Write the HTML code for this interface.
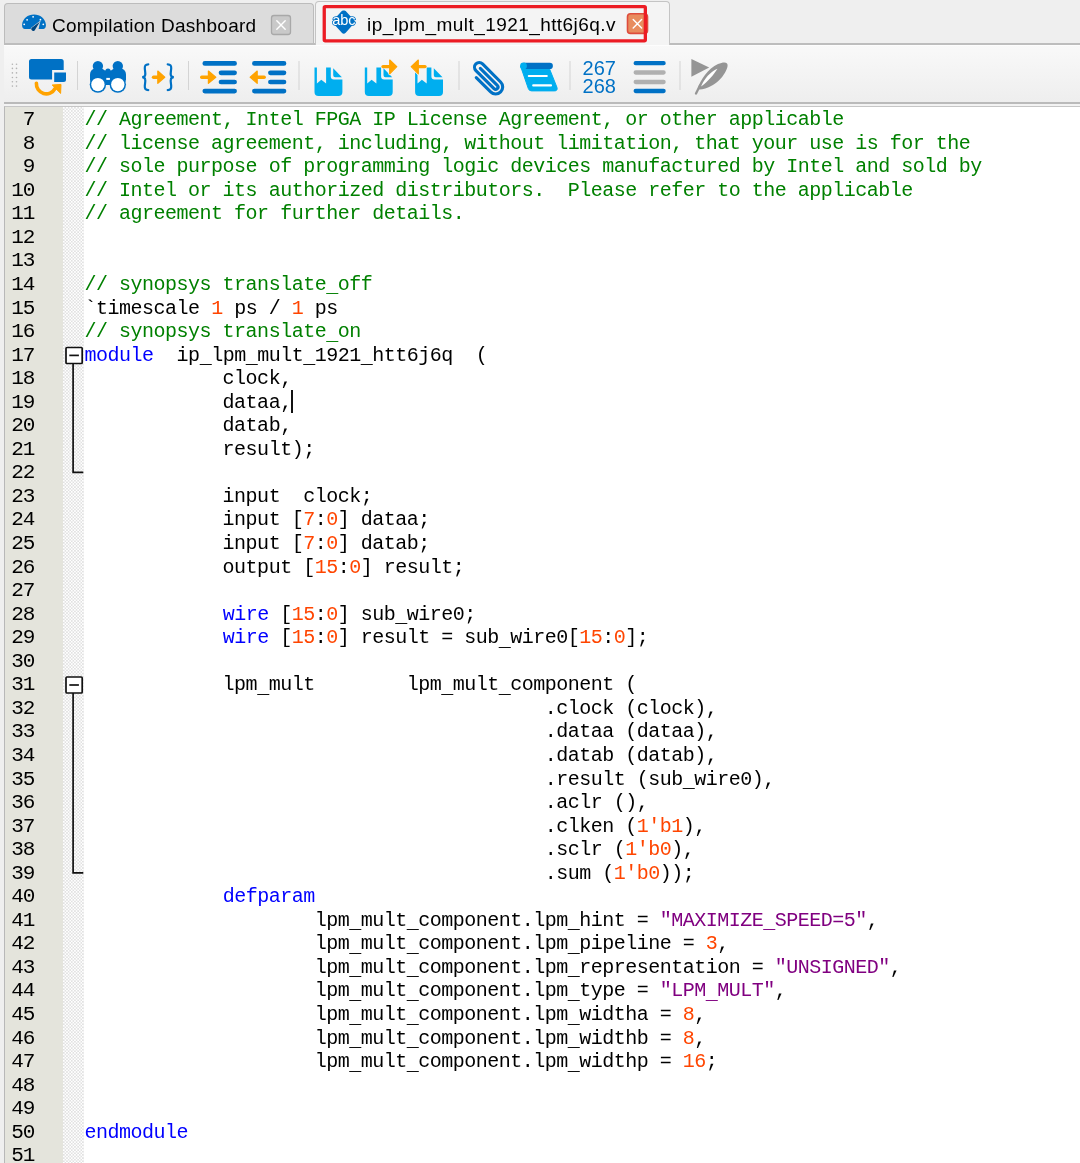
<!DOCTYPE html>
<html><head><meta charset="utf-8">
<style>
html,body{margin:0;padding:0}
body{width:1080px;height:1163px;overflow:hidden;position:relative;background:#efefef;font-family:"Liberation Sans",sans-serif}
.abs{position:absolute}
#tab1{left:4px;top:3px;width:310px;height:41px;background:#dcdcdc;border:1px solid #bcbcbc;border-bottom:none;border-radius:4px 4px 0 0;box-sizing:border-box}
#tabline{left:4px;top:43px;width:1076px;height:2px;background:#bdbdbd}
#tab2{left:315px;top:1px;width:355px;height:44px;background:#f4f4f4;border:1px solid #c4c4c4;border-bottom:none;border-radius:4px 4px 0 0;box-sizing:border-box;z-index:2}
.tabtxt{position:absolute;font-size:19px;color:#000;white-space:pre;line-height:22px}
#toolbar{left:4px;top:45px;width:1076px;height:57px;background:linear-gradient(#f9f9f9,#eeeeee)}
#tbline{left:4px;top:102px;width:1076px;height:2px;background:#bababa}
#tbhi{left:4px;top:45px;width:1076px;height:1px;background:#fdfdfd}
#tbline2{left:4px;top:104px;width:1076px;height:2px;background:#f3f3f3}
#editor{left:4px;top:106px;width:1076px;height:1057px;background:#fff;border-top:1px solid #c6c6c6;border-left:1px solid #b8b8b8;box-sizing:border-box;overflow:hidden}
#gutter{left:5px;top:107px;width:58px;height:1056px;background:#e4e4dc}
#fold{left:63px;top:107px;width:21px;height:1056px;background-color:#fff;
 background-image:conic-gradient(#e1e1e1 25%,#fff 0 50%,#e1e1e1 0 75%,#fff 0);background-size:3.2px 3.2px}
.ln{position:absolute;left:84.6px;height:23.55px;line-height:23.55px;white-space:pre;font-family:"Liberation Mono",monospace;font-size:20px;letter-spacing:-0.5px;color:#000}
.nm{position:absolute;left:5px;width:29.2px;text-align:right;height:23.55px;line-height:23.55px;white-space:pre;font-family:"Liberation Mono",monospace;font-size:21px;letter-spacing:-1.1px;color:#000}
i{font-style:normal}
b.u{font-weight:normal;position:relative;top:2.5px}
i.c{color:#008000} i.k{color:#0000ff} i.n{color:#ff4500} i.s{color:#800080}
#cursor{left:291.2px;top:390.2px;width:1.6px;height:22.7px;background:#111}
</style></head><body>
<div id="wrap" style="position:absolute;left:0;top:0;width:1080px;height:1163px;will-change:transform">
<div id="tab1" class="abs"></div>
<div id="tabline" class="abs"></div>
<div id="tab2" class="abs"></div>
<div class="tabtxt" style="left:52px;top:15.4px;letter-spacing:0.28px">Compilation Dashboard</div>
<div class="tabtxt" style="left:367px;top:13.8px;letter-spacing:0.43px;z-index:3">ip_lpm_mult_1921_htt6j6q.v</div>
<div id="toolbar" class="abs"></div>
<div id="tbline" class="abs"></div>
<div id="tbhi" class="abs"></div>
<div id="tbline2" class="abs"></div>
<div id="editor" class="abs"></div>
<div id="gutter" class="abs"></div>
<div id="fold" class="abs"></div>

<svg class="abs" style="left:0;top:0;z-index:4" width="1080" height="110" viewBox="0 0 1080 110">
 <!-- gauge icon -->
 <path d="M24.6,29.1 C22.6,28.9 21.9,26.6 22.1,24.6 C22.7,18.6 27.8,14.6 34,14.6 C40.2,14.6 45.3,18.6 45.9,24.6 C46.1,26.6 45.4,28.9 43.4,29.1 L38.6,29.1 L40.2,21.6 L30.6,29.1 Z" fill="#0071c5"/>
 <path d="M39.9,21.7 L34.6,30.4 A1.95,1.95 0 0 1 31.5,28.1 Z" fill="#00467f" stroke="#dcdcdc" stroke-width="1.1" stroke-linejoin="round"/>
 <path d="M39.9,21.7 L34.6,30.4 A1.95,1.95 0 0 1 31.5,28.1 Z" fill="#00467f"/>
 <g fill="#fff"><circle cx="24.2" cy="24.3" r="0.9"/><circle cx="27.1" cy="19.8" r="0.9"/><circle cx="33.1" cy="16.8" r="0.9"/><circle cx="40.4" cy="19.7" r="0.9"/><circle cx="43.3" cy="24.3" r="0.9"/></g>
 <!-- inactive close -->
 <rect x="271.5" y="15.5" width="19" height="19" rx="2.5" fill="#c9c9c9" stroke="#a8a8a8" stroke-width="1.3"/>
 <path d="M276.8,20.8 L285.2,29.2 M285.2,20.8 L276.8,29.2" stroke="#fff" stroke-width="1.4" stroke-linecap="round"/>
</svg>

<svg class="abs" style="left:0;top:0;z-index:5" width="1080" height="110" viewBox="0 0 1080 110">
 <!-- abc diamond -->
 <path d="M343.7,10.6 Q344.7,10 345.7,11 L354.6,20.7 Q355.5,21.7 354.6,22.7 L345.7,32.8 Q344.7,33.8 343.7,33.8 Q342.7,33.8 341.8,32.8 L332.8,22.7 Q331.9,21.7 332.8,20.7 L341.8,11 Q342.7,10 343.7,10.6 Z" fill="#0071c5"/>
 <text x="343.9" y="24.6" text-anchor="middle" font-family="Liberation Sans" font-size="14.6" letter-spacing="-0.15" fill="#fff" stroke="#0071c5" stroke-width="1.5" paint-order="stroke">abc</text>
 <!-- active close -->
 <rect x="627.5" y="13.8" width="20" height="19.6" rx="3" fill="#e88c5e" stroke="#de4c3c" stroke-width="1.6"/>
 <path d="M633.2,19.6 L641.6,28 M641.6,19.6 L633.2,28" stroke="#fff" stroke-width="1.4" stroke-linecap="round"/>
 <!-- red highlight box -->
 <rect x="324.25" y="6.65" width="321.1" height="34.2" rx="1" fill="none" stroke="#ec1c24" stroke-width="3.3"/>
</svg>

<svg class="abs" style="left:0;top:0;z-index:4" width="1080" height="110" viewBox="0 0 1080 110">
 <!-- grip -->
 <g fill="#b3b3b3"><circle cx="12.4" cy="64.2" r="0.8"/><circle cx="16.5" cy="64.2" r="0.8"/><circle cx="12.4" cy="68.4" r="0.8"/><circle cx="16.5" cy="68.4" r="0.8"/><circle cx="12.4" cy="72.9" r="0.8"/><circle cx="16.5" cy="72.9" r="0.8"/><circle cx="12.4" cy="77.5" r="0.8"/><circle cx="16.5" cy="77.5" r="0.8"/><circle cx="12.4" cy="81.7" r="0.8"/><circle cx="16.5" cy="81.7" r="0.8"/><circle cx="12.4" cy="86.1" r="0.8"/><circle cx="16.5" cy="86.1" r="0.8"/></g>
 <!-- window swap icon -->
 <path d="M31.5,58.9 L61.2,58.9 Q63.7,58.9 63.7,61.4 L63.7,70.1 L52.1,70.1 L52.1,79.6 L31.5,79.6 Q29,79.6 29,77.1 L29,61.4 Q29,58.9 31.5,58.9 Z" fill="#0071c5"/>
 <path d="M54.2,72.5 L66,72.5 L66,79.5 Q66,82 63.5,82 L54.2,82 Z" fill="#0071c5"/>
 <path d="M36.4,83.2 A9.9,9.9 0 0 0 55,88.6" fill="none" stroke="#ffa300" stroke-width="3.6" stroke-linecap="round"/>
 <path d="M52.2,85 L61,84.4 L60.6,93.4 Z" fill="#ffa300" stroke="#ffa300" stroke-width="1" stroke-linejoin="round"/>
 <!-- separators -->
 <g fill="#d4d4d4"><rect x="77" y="61" width="1" height="29"/><rect x="188" y="61" width="1" height="29"/><rect x="298.5" y="61" width="1" height="29"/><rect x="458.5" y="61" width="1" height="29"/><rect x="569.5" y="61" width="1" height="29"/><rect x="679.5" y="61" width="1" height="29"/></g>
 <!-- binoculars -->
 <g fill="#0071c5">
  <circle cx="97.9" cy="66.1" r="5.2"/><circle cx="117.8" cy="66.1" r="5.2"/>
  <rect x="90" y="68.2" width="16" height="17" rx="6"/>
  <rect x="110" y="68.2" width="16" height="17" rx="6"/>
  <rect x="96" y="70.5" width="24" height="13"/><rect x="105.6" y="74" width="4.8" height="11"/>
  <circle cx="108" cy="71" r="2.6"/>
  <circle cx="97.9" cy="84.6" r="8.2"/><circle cx="117.8" cy="84.6" r="8.2"/>
 </g>
 <g fill="#fff"><circle cx="97.9" cy="84.6" r="6.7"/><circle cx="117.8" cy="84.6" r="6.7"/><rect x="106.3" y="77.9" width="3.6" height="2"/></g>
 <!-- braces -->
 <g fill="none" stroke="#0071c5" stroke-width="2.2" stroke-linecap="round">
  <path d="M148.3,64.3 C145.5,64.3 144.6,65.8 144.8,68.5 C145,71 145.6,73.5 145.2,75 C144.9,76.4 143.8,77.1 142.2,77.2 C143.8,77.3 144.9,78 145.2,79.4 C145.6,81 145,83.5 144.8,86 C144.6,88.6 145.5,90.1 148.3,90.1"/>
  <path d="M167.7,64.3 C170.5,64.3 171.4,65.8 171.2,68.5 C171,71 170.4,73.5 170.8,75 C171.1,76.4 172.2,77.1 173.8,77.2 C172.2,77.3 171.1,78 170.8,79.4 C170.4,81 171,83.5 171.2,86 C171.4,88.6 170.5,90.1 167.7,90.1"/>
 </g>
 <path d="M153.5,77.2 L158.5,77.2" stroke="#ffa300" stroke-width="3.4" stroke-linecap="round"/>
 <path d="M157.8,71 L164.8,77.2 L157.8,83.3 Z" fill="#ffa300" stroke="#ffa300" stroke-width="1.2" stroke-linejoin="round"/>
 <!-- indent -->
 <g stroke="#0071c5" stroke-width="4.7" stroke-linecap="round">
  <path d="M204.8,63.4 L234.6,63.4 M221,72.8 L234.6,72.8 M221,82 L234.6,82 M204.8,91.1 L234.6,91.1"/>
  <path d="M254.4,63.4 L284,63.4 M270.4,72.8 L284,72.8 M270.4,82 L284,82 M254.4,91.1 L284,91.1"/>
 </g>
 <path d="M201.7,77.3 L208.5,77.3" stroke="#ffa300" stroke-width="3.4" stroke-linecap="round"/>
 <path d="M208.4,71 L215.8,77.3 L208.4,83.3 Z" fill="#ffa300" stroke="#ffa300" stroke-width="1.2" stroke-linejoin="round"/>
 <path d="M264.2,77.3 L257.2,77.3" stroke="#ffa300" stroke-width="3.4" stroke-linecap="round"/>
 <path d="M257.2,71 L250.2,77.3 L257.2,83.3 Z" fill="#ffa300" stroke="#ffa300" stroke-width="1.2" stroke-linejoin="round"/>
 <!-- bookmark docs -->
 <defs>
  <path id="bm" d="M0,0 L2.4,0 L2.4,15.9 L6.8,12.1 L11.6,15.9 L11.6,0 L16.3,0 L16.3,8.9 Q16.3,11.9 19.3,11.9 L27.9,11.9 L27.9,24.5 Q27.9,28.5 23.9,28.5 L4,28.5 Q0,28.5 0,24.5 Z M18.7,0.7 L27.4,9.7 L20.7,9.7 Q18.7,9.7 18.7,7.7 Z"/>
 </defs>
 <use href="#bm" x="314.5" y="67.6" fill="#00aeef"/>
 <use href="#bm" x="364.8" y="67.6" fill="#00aeef"/>
 <use href="#bm" x="415.1" y="67.6" fill="#00aeef"/>
 <g stroke="#f5f5f5" stroke-width="2.6" stroke-linejoin="round" stroke-linecap="round">
  <path d="M383,66.6 L389.5,66.6 M389.7,60 L396.8,66.6 L389.7,73.8 Z" fill="none"/>
  <path d="M425,66.6 L418.5,66.6 M418.3,60 L411.2,66.6 L418.3,73.8 Z" fill="none"/>
 </g>
 <path d="M383,66.6 L389.5,66.6" stroke="#ffa300" stroke-width="3.3" stroke-linecap="round"/>
 <path d="M389.7,60 L396.8,66.6 L389.7,73.8 Z" fill="#ffa300" stroke="#ffa300" stroke-width="1.2" stroke-linejoin="round"/>
 <path d="M425,66.6 L418.5,66.6" stroke="#ffa300" stroke-width="3.3" stroke-linecap="round"/>
 <path d="M418.3,60 L411.2,66.6 L418.3,73.8 Z" fill="#ffa300" stroke="#ffa300" stroke-width="1.2" stroke-linejoin="round"/>
 <!-- paperclip -->
 <path transform="translate(472.58,73.88) rotate(-45)" d="M0,5.2 L0,25.55 A7.05,7.05 0 0 0 14.1,25.55 L14.1,0 A4.7,4.7 0 0 0 4.7,0 L4.7,25.55 A2.35,2.35 0 0 0 9.4,25.55 L9.4,1.5" fill="none" stroke="#0071c5" stroke-width="3.1" stroke-linecap="round" stroke-linejoin="round"/>
 <!-- scroll -->
 <path d="M520.5,66 L549.5,68.8 L557,87.5 Q557.8,90.9 554.5,90.9 L531.5,90.9 Q529,90.9 528.3,88.5 Z" fill="#00aeef" stroke="#00aeef" stroke-width="1" stroke-linejoin="round"/>
 <path d="M523.5,62.8 L549.8,62.8 A3.1,3.1 0 0 1 549.8,69 L523.5,69 Z" fill="#0071c5"/>
 <circle cx="523.5" cy="66" r="3.4" fill="#00aeef"/>
 <path d="M528.8,76 L546.8,76 M533.2,85.4 L551,85.4" stroke="#fff" stroke-width="2.1" stroke-linecap="round"/>
 <!-- 267/268 -->
 <text x="582.6" y="74.9" font-family="Liberation Sans" font-size="20" fill="#0071c5" letter-spacing="0">267</text>
 <text x="582.6" y="93.2" font-family="Liberation Sans" font-size="20" fill="#0071c5" letter-spacing="0">268</text>
 <!-- lines icon -->
 <g stroke-width="4.3" stroke-linecap="round">
  <path d="M635.7,63.2 L663.6,63.2 M635.7,91 L663.6,91" stroke="#0071c5"/>
  <path d="M635.7,72.5 L663.6,72.5 M635.7,82 L663.6,82" stroke="#b0b0b0"/>
 </g>
 <!-- feather -->
 <path d="M691.4,59.1 L709.2,67.4 L691.4,76.7 Z" fill="#959595"/>
 <path d="M697.6,88.5 C700.5,80 708,68.5 718,64 C724,61.5 728.5,61.8 727.5,66.5 C726,74 716,88 699.5,89.6 Z" fill="#959595"/>
 <path d="M696,93.5 L700,85.5" stroke="#959595" stroke-width="2.3" stroke-linecap="round"/>
 <path d="M701,86.6 C704.5,78.5 710,72 717.5,68.8 C713.5,75 707.5,82 701,86.6 Z" fill="#fff"/>
</svg>

<div class="nm" style="top:108.10px">7</div>
<div class="nm" style="top:131.65px">8</div>
<div class="nm" style="top:155.20px">9</div>
<div class="nm" style="top:178.75px">10</div>
<div class="nm" style="top:202.30px">11</div>
<div class="nm" style="top:225.85px">12</div>
<div class="nm" style="top:249.40px">13</div>
<div class="nm" style="top:272.95px">14</div>
<div class="nm" style="top:296.50px">15</div>
<div class="nm" style="top:320.05px">16</div>
<div class="nm" style="top:343.60px">17</div>
<div class="nm" style="top:367.15px">18</div>
<div class="nm" style="top:390.70px">19</div>
<div class="nm" style="top:414.25px">20</div>
<div class="nm" style="top:437.80px">21</div>
<div class="nm" style="top:461.35px">22</div>
<div class="nm" style="top:484.90px">23</div>
<div class="nm" style="top:508.45px">24</div>
<div class="nm" style="top:532.00px">25</div>
<div class="nm" style="top:555.55px">26</div>
<div class="nm" style="top:579.10px">27</div>
<div class="nm" style="top:602.65px">28</div>
<div class="nm" style="top:626.20px">29</div>
<div class="nm" style="top:649.75px">30</div>
<div class="nm" style="top:673.30px">31</div>
<div class="nm" style="top:696.85px">32</div>
<div class="nm" style="top:720.40px">33</div>
<div class="nm" style="top:743.95px">34</div>
<div class="nm" style="top:767.50px">35</div>
<div class="nm" style="top:791.05px">36</div>
<div class="nm" style="top:814.60px">37</div>
<div class="nm" style="top:838.15px">38</div>
<div class="nm" style="top:861.70px">39</div>
<div class="nm" style="top:885.25px">40</div>
<div class="nm" style="top:908.80px">41</div>
<div class="nm" style="top:932.35px">42</div>
<div class="nm" style="top:955.90px">43</div>
<div class="nm" style="top:979.45px">44</div>
<div class="nm" style="top:1003.00px">45</div>
<div class="nm" style="top:1026.55px">46</div>
<div class="nm" style="top:1050.10px">47</div>
<div class="nm" style="top:1073.65px">48</div>
<div class="nm" style="top:1097.20px">49</div>
<div class="nm" style="top:1120.75px">50</div>
<div class="nm" style="top:1144.30px">51</div>
<div class="ln" style="top:108.10px"><i class="c">// Agreement, Intel FPGA IP License Agreement, or other applicable</i></div>
<div class="ln" style="top:131.65px"><i class="c">// license agreement, including, without limitation, that your use is for the</i></div>
<div class="ln" style="top:155.20px"><i class="c">// sole purpose of programming logic devices manufactured by Intel and sold by</i></div>
<div class="ln" style="top:178.75px"><i class="c">// Intel or its authorized distributors.  Please refer to the applicable</i></div>
<div class="ln" style="top:202.30px"><i class="c">// agreement for further details.</i></div>
<div class="ln" style="top:272.95px"><i class="c">// synopsys translate<b class="u">_</b>off</i></div>
<div class="ln" style="top:296.50px">`timescale <i class="n">1</i> ps / <i class="n">1</i> ps</div>
<div class="ln" style="top:320.05px"><i class="c">// synopsys translate<b class="u">_</b>on</i></div>
<div class="ln" style="top:343.60px"><i class="k">module</i>  ip<b class="u">_</b>lpm<b class="u">_</b>mult<b class="u">_</b>1921<b class="u">_</b>htt6j6q  (</div>
<div class="ln" style="top:367.15px">            clock,</div>
<div class="ln" style="top:390.70px">            dataa,</div>
<div class="ln" style="top:414.25px">            datab,</div>
<div class="ln" style="top:437.80px">            result);</div>
<div class="ln" style="top:484.90px">            input  clock;</div>
<div class="ln" style="top:508.45px">            input [<i class="n">7</i>:<i class="n">0</i>] dataa;</div>
<div class="ln" style="top:532.00px">            input [<i class="n">7</i>:<i class="n">0</i>] datab;</div>
<div class="ln" style="top:555.55px">            output [<i class="n">15</i>:<i class="n">0</i>] result;</div>
<div class="ln" style="top:602.65px">            <i class="k">wire</i> [<i class="n">15</i>:<i class="n">0</i>] sub<b class="u">_</b>wire0;</div>
<div class="ln" style="top:626.20px">            <i class="k">wire</i> [<i class="n">15</i>:<i class="n">0</i>] result = sub<b class="u">_</b>wire0[<i class="n">15</i>:<i class="n">0</i>];</div>
<div class="ln" style="top:673.30px">            lpm<b class="u">_</b>mult        lpm<b class="u">_</b>mult<b class="u">_</b>component (</div>
<div class="ln" style="top:696.85px">                                        .clock (clock),</div>
<div class="ln" style="top:720.40px">                                        .dataa (dataa),</div>
<div class="ln" style="top:743.95px">                                        .datab (datab),</div>
<div class="ln" style="top:767.50px">                                        .result (sub<b class="u">_</b>wire0),</div>
<div class="ln" style="top:791.05px">                                        .aclr (),</div>
<div class="ln" style="top:814.60px">                                        .clken (<i class="n">1'b1</i>),</div>
<div class="ln" style="top:838.15px">                                        .sclr (<i class="n">1'b0</i>),</div>
<div class="ln" style="top:861.70px">                                        .sum (<i class="n">1'b0</i>));</div>
<div class="ln" style="top:885.25px">            <i class="k">defparam</i></div>
<div class="ln" style="top:908.80px">                    lpm<b class="u">_</b>mult<b class="u">_</b>component.lpm<b class="u">_</b>hint = <i class="s">"MAXIMIZE<b class="u">_</b>SPEED=5"</i>,</div>
<div class="ln" style="top:932.35px">                    lpm<b class="u">_</b>mult<b class="u">_</b>component.lpm<b class="u">_</b>pipeline = <i class="n">3</i>,</div>
<div class="ln" style="top:955.90px">                    lpm<b class="u">_</b>mult<b class="u">_</b>component.lpm<b class="u">_</b>representation = <i class="s">"UNSIGNED"</i>,</div>
<div class="ln" style="top:979.45px">                    lpm<b class="u">_</b>mult<b class="u">_</b>component.lpm<b class="u">_</b>type = <i class="s">"LPM<b class="u">_</b>MULT"</i>,</div>
<div class="ln" style="top:1003.00px">                    lpm<b class="u">_</b>mult<b class="u">_</b>component.lpm<b class="u">_</b>widtha = <i class="n">8</i>,</div>
<div class="ln" style="top:1026.55px">                    lpm<b class="u">_</b>mult<b class="u">_</b>component.lpm<b class="u">_</b>widthb = <i class="n">8</i>,</div>
<div class="ln" style="top:1050.10px">                    lpm<b class="u">_</b>mult<b class="u">_</b>component.lpm<b class="u">_</b>widthp = <i class="n">16</i>;</div>
<div class="ln" style="top:1120.75px"><i class="k">endmodule</i></div>

<svg class="abs" style="left:0;top:0;z-index:4" width="100" height="1163" viewBox="0 0 100 1163">
 <g fill="none" stroke="#111" stroke-width="1.7">
  <rect x="66" y="347.5" width="16.2" height="16" rx="1" fill="#fff"/>
  <path d="M69.3,355.4 L78.9,355.4"/>
  <path d="M73.1,363.5 L73.1,472.4 L83.3,472.4"/>
  <rect x="66" y="677" width="16.2" height="16" rx="1" fill="#fff"/>
  <path d="M69.3,685 L78.9,685"/>
  <path d="M73.1,693 L73.1,872.8 L83.3,872.8"/>
 </g>
</svg>
<div id="cursor" class="abs"></div>
</div>
</body></html>
